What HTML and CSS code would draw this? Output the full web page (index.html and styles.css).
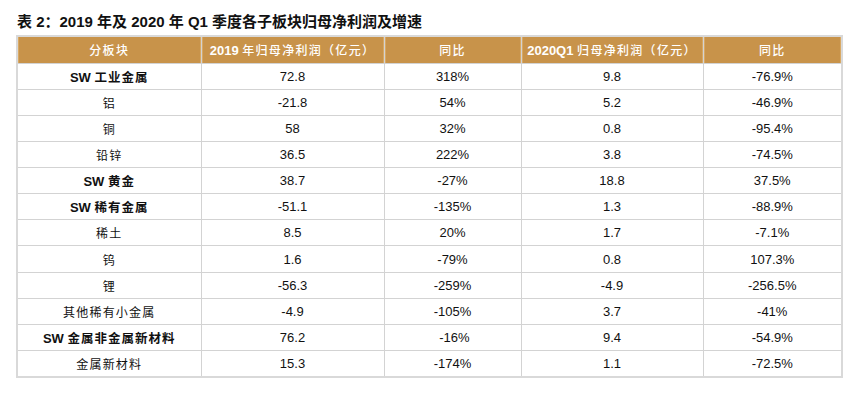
FILE: index.html
```html
<!DOCTYPE html>
<html lang="zh-CN">
<head>
<meta charset="utf-8">
<link rel="stylesheet" href="styles.css">
</head>
<body>
<div class="page">
  <h1 class="title">表 2：2019 年及 2020 年 Q1 季度各子板块归母净利润及增速</h1>
  <table class="tbl">
    <colgroup>
      <col class="c1"><col class="c2"><col class="c3"><col class="c4"><col class="c5">
    </colgroup>
    <thead>
      <tr>
        <th><span class="cn">分板块</span></th>
        <th><b>2019</b> <span class="cn">年归母净利润（亿元）</span></th>
        <th><span class="cn">同比</span></th>
        <th><b>2020Q1</b> <span class="cn">归母净利润（亿元）</span></th>
        <th><span class="cn">同比</span></th>
      </tr>
    </thead>
    <tbody>
      <tr class="sw"><td><b>SW</b> <span class="cnb">工业金属</span></td><td>72.8</td><td>318%</td><td>9.8</td><td>-76.9%</td></tr>
      <tr><td><span class="cn">铝</span></td><td>-21.8</td><td>54%</td><td>5.2</td><td>-46.9%</td></tr>
      <tr><td><span class="cn">铜</span></td><td>58</td><td>32%</td><td>0.8</td><td>-95.4%</td></tr>
      <tr><td><span class="cn">铅锌</span></td><td>36.5</td><td>222%</td><td>3.8</td><td>-74.5%</td></tr>
      <tr class="sw"><td><b>SW</b> <span class="cnb">黄金</span></td><td>38.7</td><td>-27%</td><td>18.8</td><td>37.5%</td></tr>
      <tr class="sw"><td><b>SW</b> <span class="cnb">稀有金属</span></td><td>-51.1</td><td>-135%</td><td>1.3</td><td>-88.9%</td></tr>
      <tr><td><span class="cn">稀土</span></td><td>8.5</td><td>20%</td><td>1.7</td><td>-7.1%</td></tr>
      <tr><td><span class="cn">钨</span></td><td>1.6</td><td>-79%</td><td>0.8</td><td>107.3%</td></tr>
      <tr><td><span class="cn">锂</span></td><td>-56.3</td><td>-259%</td><td>-4.9</td><td>-256.5%</td></tr>
      <tr><td><span class="cn">其他稀有小金属</span></td><td>-4.9</td><td>-105%</td><td>3.7</td><td>-41%</td></tr>
      <tr class="sw"><td><b>SW</b> <span class="cnb">金属非金属新材料</span></td><td>76.2</td><td>&nbsp;-16%</td><td>9.4</td><td>-54.9%</td></tr>
      <tr><td><span class="cn">金属新材料</span></td><td>15.3</td><td>-174%</td><td>1.1</td><td>-72.5%</td></tr>
    </tbody>
  </table>
</div>
</body>
</html>
```

FILE: styles.css
```css
html, body {
  margin: 0;
  padding: 0;
  background: #ffffff;
}

body {
  font-family: "Liberation Sans", "Noto Sans CJK SC", sans-serif;
  color: #111111;
}

.page {
  padding: 13px 10px 0 16px;
}

.title {
  margin: 0 0 4px 1px;
  font-size: 15px;
  line-height: 18px;
  font-weight: 700;
  color: #111111;
  letter-spacing: 0;
}

.tbl {
  border-collapse: collapse;
  table-layout: fixed;
  width: 825px;
  border: 2px solid #d9d9d9;
  font-size: 13px;
}

.c1 { width: 184px; }
.c2 { width: 183px; }
.c3 { width: 137px; }
.c4 { width: 182px; }
.c5 { width: 139px; }

.tbl th,
.tbl td {
  border: 1px solid #d3d3d3;
  text-align: center;
  vertical-align: middle;
  padding: 0;
  white-space: nowrap;
}

.tbl thead tr {
  height: 27px;
}

.tbl th {
  background: #c8934a;
  color: #ffffff;
  font-weight: 400;
  font-size: 13px;
  box-shadow: inset 9px 0 0 -8px #d8a965, inset -9px 0 0 -8px #d8a965;
}

.tbl th b {
  font-weight: 700;
}

.tbl th .cn {
  font-weight: 500;
  letter-spacing: 1.3px;
}

.tbl tbody tr {
  height: 26.15px;
}

.tbl td {
  color: #111111;
}

.cn {
  font-size: 12px;
  letter-spacing: 1.2px;
  font-weight: 400;
}

.cnb {
  font-size: 12.5px;
  letter-spacing: 1px;
  font-weight: 700;
}

.tbl td b {
  font-weight: 700;
}
```
